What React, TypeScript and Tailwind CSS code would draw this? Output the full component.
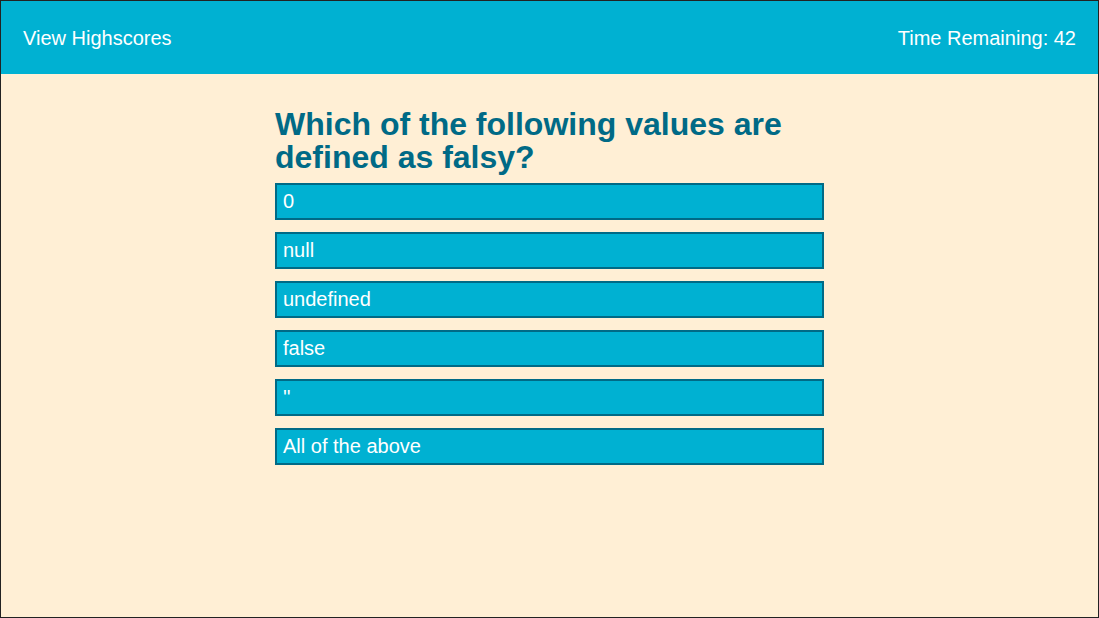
const answers = ['0', 'null', 'undefined', 'false', "''", 'All of the above'];

export default function App() {
  return (
    <div className="h-[618px] border border-[#222] bg-[#ffefd5] font-['Liberation_Sans',Arial,sans-serif]">
      <header className="flex h-[73px] items-center justify-between bg-[#00b1d2] px-[22px] text-[20px] text-white">
        <a className="cursor-pointer">View Highscores</a>
        <span>Time Remaining: 42</span>
      </header>

      <main className="mx-auto w-[549px] pt-[34px]">
        <h1 className="mb-[9px] text-[32px] font-bold leading-[33px] text-[#006a86]">
          Which of the following values are defined as falsy?
        </h1>
        <div className="flex flex-col gap-[12px]">
          {answers.map((a) => (
            <button
              key={a}
              className="h-[37px] border-2 border-[#006a86] bg-[#00b1d2] px-[6px] pb-[2px] text-left text-[20px] text-white"
            >
              {a}
            </button>
          ))}
        </div>
      </main>
    </div>
  );
}
